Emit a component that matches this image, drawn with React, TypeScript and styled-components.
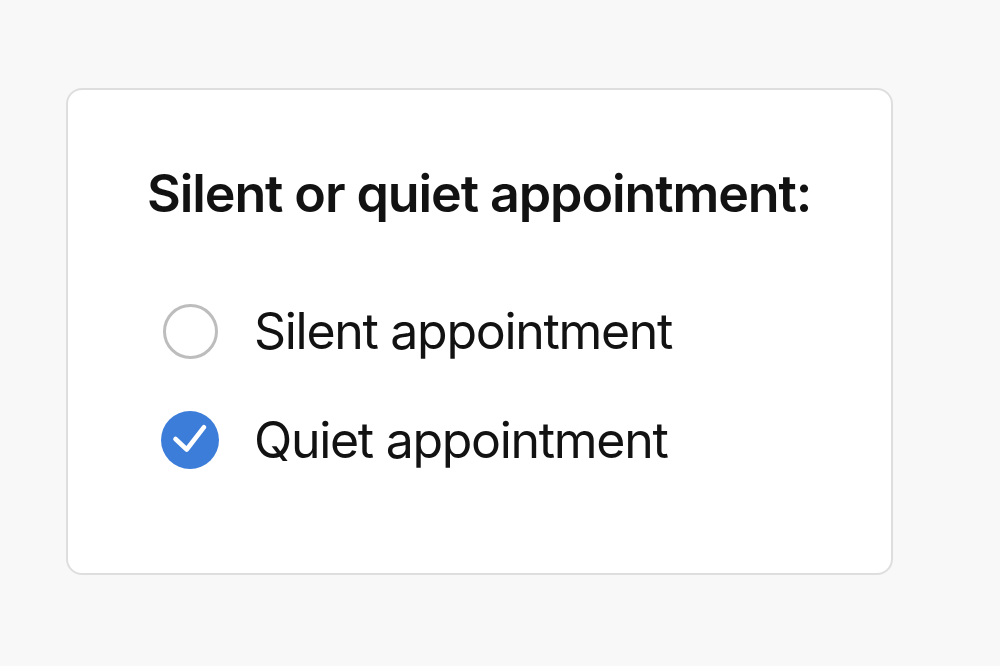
import React, { useState } from "react";
import styled, { createGlobalStyle } from "styled-components";

const Global = createGlobalStyle`
  html, body { margin: 0; padding: 0; background: #f8f8f8; }
  body { font-family: Inter, "Noto Sans", sans-serif; color: #111; }
`;

const Page = styled.div`
  width: 1000px;
  height: 666px;
  box-sizing: border-box;
  padding: 88px 0 0 66px;
`;

const Card = styled.div`
  width: 827px;
  height: 487px;
  box-sizing: border-box;
  background: #fff;
  border: 2px solid #dedede;
  border-radius: 16px;
  padding: 74px 0 0 79px;
`;

const Title = styled.h2`
  margin: 0;
  font-size: 52px;
  font-weight: 600;
  line-height: 60px;
  letter-spacing: -1.1px;
  color: #121212;
`;

const List = styled.div`
  margin-top: 78px;
  display: flex;
  flex-direction: column;
  gap: 51px;
`;

const Row = styled.label`
  display: flex;
  align-items: center;
  gap: 35px;
  cursor: pointer;
  padding-left: 14px;
`;

const Slot = styled.span`
  width: 58px;
  height: 58px;
  flex: none;
  display: flex;
  align-items: center;
  justify-content: center;
`;

const Circle = styled.span<{ $checked: boolean }>`
  width: ${(p) => (p.$checked ? "58px" : "55px")};
  height: ${(p) => (p.$checked ? "58px" : "55px")};
  box-sizing: border-box;
  border-radius: 50%;
  border: ${(p) => (p.$checked ? "none" : "3px solid #bdbdbd")};
  background: ${(p) => (p.$checked ? "#3c7dd9" : "#fff")};
  display: flex;
  align-items: center;
  justify-content: center;
`;

const Label = styled.span`
  font-size: 50px;
  font-weight: 400;
  line-height: 58px;
  color: #121212;
  letter-spacing: -1.3px;
`;

const options = ["Silent appointment", "Quiet appointment"];

export default function App() {
  const [sel, setSel] = useState(1);
  return (
    <>
      <Global />
      <Page>
        <Card>
          <Title>Silent or quiet appointment:</Title>
          <List>
            {options.map((o, i) => (
              <Row key={o} onClick={() => setSel(i)}>
                <Slot>
                  <Circle $checked={sel === i}>
                    {sel === i && (
                      <svg width="58" height="58" viewBox="0 0 58 58">
                        <path
                          d="M14.5 28 L25.7 38.5 L43 16.2"
                          fill="none"
                          stroke="#fff"
                          strokeWidth="4.6"
                          strokeLinecap="round"
                          strokeLinejoin="round"
                        />
                      </svg>
                    )}
                  </Circle>
                </Slot>
                <Label>{o}</Label>
              </Row>
            ))}
          </List>
        </Card>
      </Page>
    </>
  );
}
